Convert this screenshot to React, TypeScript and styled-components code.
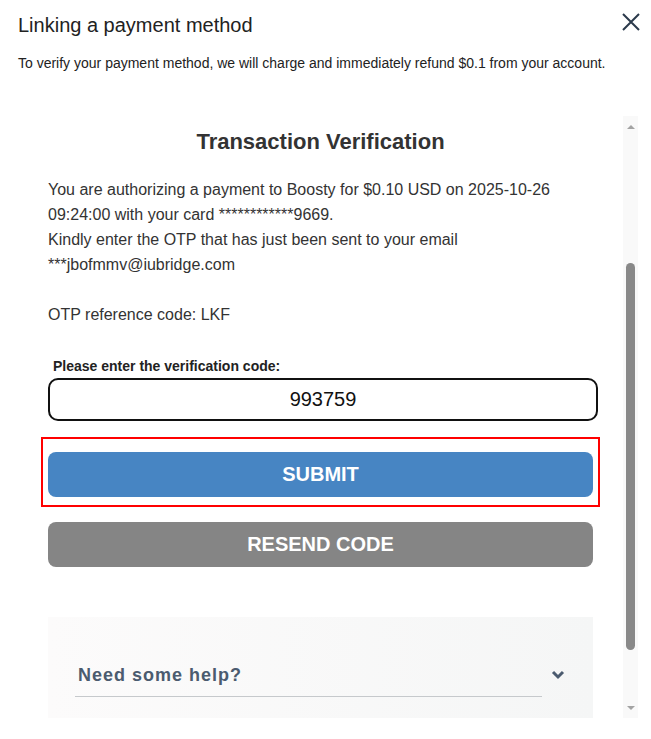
import React from "react";
import styled, { createGlobalStyle } from "styled-components";

const GlobalStyle = createGlobalStyle`
  html, body {
    margin: 0;
    padding: 0;
    background: #ffffff;
  }
  body {
    font-family: "Liberation Sans", Arial, sans-serif;
  }
`;

const Modal = styled.div`
  width: 651px;
  height: 739px;
  overflow: hidden;
  background: #fff;
`;

const Header = styled.div`
  display: flex;
  justify-content: space-between;
  align-items: flex-start;
  padding: 13px 10px 0 18px;
`;

const Title = styled.h2`
  margin: 0;
  font-size: 20px;
  line-height: 24px;
  font-weight: 400;
  color: #222;
`;

const CloseButton = styled.button`
  border: 0;
  background: none;
  padding: 0;
  margin-top: -1px;
  width: 20px;
  height: 20px;
  cursor: pointer;
  color: #2b3a4b;
`;

const Subtitle = styled.p`
  margin: 18px 0 0;
  padding: 0 18px;
  font-size: 14px;
  line-height: 17px;
  color: #222;
`;

const Frame = styled.div`
  display: flex;
  margin-top: 44px;
  height: 602px;
`;

const FrameContent = styled.div`
  width: 623px;
  overflow: hidden;
  padding: 13px 0 0 48px;
  box-sizing: border-box;
`;

const Column = styled.div`
  width: 550px;
  display: flex;
  flex-direction: column;
`;

const Heading = styled.h1`
  width: 545px;
  margin: 0;
  text-align: center;
  font-size: 22px;
  line-height: 26px;
  font-weight: 700;
  color: #333;
`;

const Message = styled.p`
  margin: 22px 0 0;
  font-size: 16px;
  line-height: 25px;
  color: #333;
`;

const Label = styled.label`
  margin: 31px 0 0 5px;
  font-size: 14px;
  line-height: 17px;
  font-weight: 700;
  color: #222;
`;

const CodeInput = styled.input`
  margin-top: 3px;
  width: 550px;
  height: 43px;
  box-sizing: border-box;
  border: 2px solid #111;
  border-radius: 10px;
  text-align: center;
  font-family: "Liberation Sans", Arial, sans-serif;
  font-size: 20px;
  color: #111;
  outline: none;
`;

const Highlight = styled.div`
  margin: 16px 0 0 -7px;
  width: 559px;
  box-sizing: border-box;
  border: 2px solid #f00;
  padding: 13px 5px 8px;
`;

const ActionButton = styled.button<{ $tone: "primary" | "muted" }>`
  display: block;
  width: 545px;
  height: 45px;
  border: 0;
  border-radius: 8px;
  background: ${(p) => (p.$tone === "primary" ? "#4785c3" : "#858585")};
  color: #fff;
  font-family: "Liberation Sans", Arial, sans-serif;
  font-size: 20px;
  font-weight: 700;
  cursor: pointer;
`;

const ResendButton = styled(ActionButton)`
  margin-top: 15px;
`;

const HelpPanel = styled.div`
  margin-top: 50px;
  width: 545px;
  box-sizing: border-box;
  padding: 47px 27px 40px;
  background: linear-gradient(to right, #fcfbfb, #f5f6f6);
  display: flex;
  align-items: flex-start;
`;

const HelpTitle = styled.div`
  flex: 1;
  padding: 0 0 10px 3px;
  border-bottom: 1px solid #c6c9cc;
  font-size: 18px;
  line-height: 22px;
  font-weight: 700;
  letter-spacing: 1px;
  color: #4b5b6f;
`;

const Chevron = styled.svg`
  margin: 6px 0 0 8px;
  width: 16px;
  height: 10px;
  color: #4b5b6f;
`;

const ScrollTrack = styled.div`
  width: 15px;
  background: #f9f9f9;
  display: flex;
  flex-direction: column;
`;

const ArrowBox = styled.div`
  height: 20px;
  display: flex;
  align-items: center;
  justify-content: center;
`;

const ThumbArea = styled.div`
  flex: 1;
  padding-top: 127px;
`;

const Thumb = styled.div`
  margin: 0 auto;
  width: 9px;
  height: 387px;
  border-radius: 5px;
  background: #898989;
`;

const Arrow = ({ up }: { up?: boolean }) => (
  <svg width="8" height="5" viewBox="0 0 8 5">
    <path d={up ? "M0 5 L4 1 L8 5 Z" : "M0 0 L4 4 L8 0 Z"} fill="#a3a3a3" />
  </svg>
);

export default function App() {
  return (
    <Modal>
      <GlobalStyle />
      <Header>
        <Title>Linking a payment method</Title>
        <CloseButton aria-label="Close">
          <svg width="20" height="20" viewBox="0 0 20 20">
            <path d="M2 2 L18 18 M18 2 L2 18" stroke="currentColor" strokeWidth="2" />
          </svg>
        </CloseButton>
      </Header>
      <Subtitle>
        To verify your payment method, we will charge and immediately refund $0.1 from your account.
      </Subtitle>
      <Frame>
        <FrameContent>
          <Column>
            <Heading>Transaction Verification</Heading>
            <Message>
              You are authorizing a payment to Boosty for $0.10 USD on 2025-10-26
              <br />
              09:24:00 with your card ************9669.
              <br />
              Kindly enter the OTP that has just been sent to your email
              <br />
              ***jbofmmv@iubridge.com
              <br />
              <br />
              OTP reference code: LKF
            </Message>
            <Label htmlFor="otp">Please enter the verification code:</Label>
            <CodeInput id="otp" defaultValue="993759" />
            <Highlight>
              <ActionButton $tone="primary">SUBMIT</ActionButton>
            </Highlight>
            <ResendButton $tone="muted">RESEND CODE</ResendButton>
            <HelpPanel>
              <HelpTitle>Need some help?</HelpTitle>
              <Chevron viewBox="0 0 16 10">
                <path d="M3 2 L8 7 L13 2" fill="none" stroke="currentColor" strokeWidth="3" />
              </Chevron>
            </HelpPanel>
          </Column>
        </FrameContent>
        <ScrollTrack>
          <ArrowBox>
            <Arrow up />
          </ArrowBox>
          <ThumbArea>
            <Thumb />
          </ThumbArea>
          <ArrowBox>
            <Arrow />
          </ArrowBox>
        </ScrollTrack>
      </Frame>
    </Modal>
  );
}
